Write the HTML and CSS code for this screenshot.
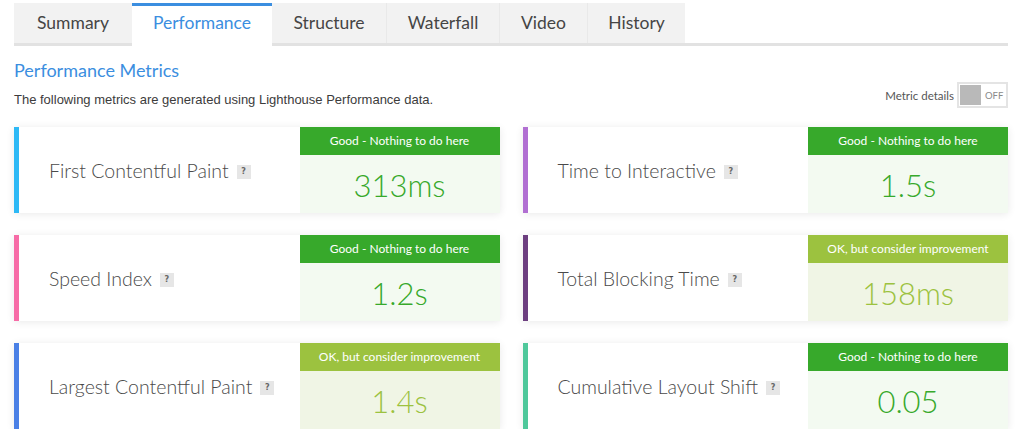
FILE: index.html
```html
<!DOCTYPE html>
<html lang="en">
<head>
<meta charset="utf-8">
<title>Performance</title>
<link rel="stylesheet" href="styles.css">
</head>
<body>
<div class="page">
  <nav class="tabs">
    <div class="tab">Summary</div>
    <div class="tab active">Performance</div>
    <div class="tab">Structure</div>
    <div class="tab">Waterfall</div>
    <div class="tab">Video</div>
    <div class="tab">History</div>
  </nav>

  <h2 class="heading">Performance Metrics</h2>
  <div class="intro">
    <p class="desc">The following metrics are generated using Lighthouse Performance data.</p>
    <div class="toggle-group">
      <span class="toggle-label">Metric details</span>
      <span class="toggle"><span class="knob"></span><span class="off">OFF</span></span>
    </div>
  </div>

  <div class="metrics">
    <div class="card fcp">
      <div class="title">First Contentful Paint <span class="help">?</span></div>
      <div class="status good"><div class="label">Good - Nothing to do here</div><div class="value">313ms</div></div>
    </div>
    <div class="card tti">
      <div class="title">Time to Interactive <span class="help">?</span></div>
      <div class="status good"><div class="label">Good - Nothing to do here</div><div class="value">1.5s</div></div>
    </div>
    <div class="card si">
      <div class="title">Speed Index <span class="help">?</span></div>
      <div class="status good"><div class="label">Good - Nothing to do here</div><div class="value">1.2s</div></div>
    </div>
    <div class="card tbt">
      <div class="title">Total Blocking Time <span class="help">?</span></div>
      <div class="status ok"><div class="label">OK, but consider improvement</div><div class="value">158ms</div></div>
    </div>
    <div class="card lcp">
      <div class="title">Largest Contentful Paint <span class="help">?</span></div>
      <div class="status ok"><div class="label">OK, but consider improvement</div><div class="value">1.4s</div></div>
    </div>
    <div class="card cls">
      <div class="title">Cumulative Layout Shift <span class="help">?</span></div>
      <div class="status good"><div class="label">Good - Nothing to do here</div><div class="value">0.05</div></div>
    </div>
  </div>
</div>
</body>
</html>
```

FILE: styles.css
```css
* { box-sizing: border-box; }
html, body { margin: 0; padding: 0; background: #fff; }
body { font-family: Lato, "Noto Sans", sans-serif; color: #444; }

.page { padding: 3px 16px 0 14px; }

.tabs {
  display: grid;
  grid-template-columns: 118px 140px 114px 113px 88px 98px;
  align-items: end;
  border-bottom: 3px solid #e2e2e2;
}
.tab {
  height: 40px;
  line-height: 40px;
  text-align: center;
  font-size: 17.5px;
  color: #454545;
  background: #f2f2f2;
  border-left: 1px solid #e9e9e9;
}
.tab:first-child { border-left: none; }
.tab.active {
  background: #fff;
  color: #3b8ee0;
  border-top: 3px solid #3b8ee0;
  border-left: none;
  height: 43px;
  line-height: 34px;
  margin-bottom: -3px;
}
.tab.active + .tab { border-left: none; }

.heading {
  margin: 12px 0 0;
  font-size: 18px;
  line-height: 24px;
  font-weight: 400;
  color: #3b8ee0;
}

.intro {
  display: flex;
  justify-content: space-between;
  align-items: flex-end;
}
.desc {
  margin: 0;
  font-family: "Liberation Sans", Arial, sans-serif;
  font-size: 13px;
  line-height: 16px;
  color: #3c3c3c;
}
.toggle-group { display: flex; align-items: center; gap: 3px; }
.toggle-label { font-size: 11.5px; color: #555; }
.toggle {
  display: flex;
  align-items: center;
  width: 51px;
  height: 26px;
  border: 2px solid #e4e4e4;
  padding: 1px;
}
.knob { width: 21px; height: 20px; background: #b9b9b9; }
.off { font-size: 9.5px; color: #8a8a8a; margin-left: 4px; }

.metrics {
  margin-top: 19px;
  display: grid;
  grid-template-columns: 1fr 1fr;
  grid-auto-rows: 86px;
  column-gap: 23px;
  row-gap: 22px;
}
.card {
  display: flex;
  background: #fff;
  border-left: 5px solid #2cb9f5;
  box-shadow: 0 1px 8px rgba(0, 0, 0, 0.09);
}
.card.fcp { border-left-color: #2db9f6; }
.card.tti { border-left-color: #b16fd2; }
.card.si  { border-left-color: #f76ca7; }
.card.tbt { border-left-color: #6d3f80; }
.card.lcp { border-left-color: #4a80e6; }
.card.cls { border-left-color: #4fc89b; }

.title {
  flex: 1;
  display: flex;
  align-items: center;
  padding-left: 30px;
  font-size: 19.5px;
  font-weight: 300;
  color: #4a4a4a;
}
.help {
  display: inline-block;
  width: 14px;
  height: 14px;
  margin: 4px 0 0 8px;
  background: #e6e6e6;
  color: #666;
  font-family: "DejaVu Sans", sans-serif;
  font-size: 8px;
  font-weight: 700;
  line-height: 14px;
  text-align: center;
}

.status {
  width: 200px;
  display: flex;
  flex-direction: column;
}
.label {
  height: 28px;
  line-height: 28px;
  text-align: center;
  font-size: 12px;
  color: #fff;
}
.value {
  flex: 1;
  display: flex;
  align-items: center;
  justify-content: center;
  font-size: 31px;
  font-weight: 300;
  padding-top: 2px;
}
.status.good .label { background: #37a92b; }
.status.good .value { background: #f3faf1; color: #37a92b; }
.status.ok .label { background: #9cc23f; }
.status.ok .value { background: #f0f5e5; color: #9cc23f; }
```
